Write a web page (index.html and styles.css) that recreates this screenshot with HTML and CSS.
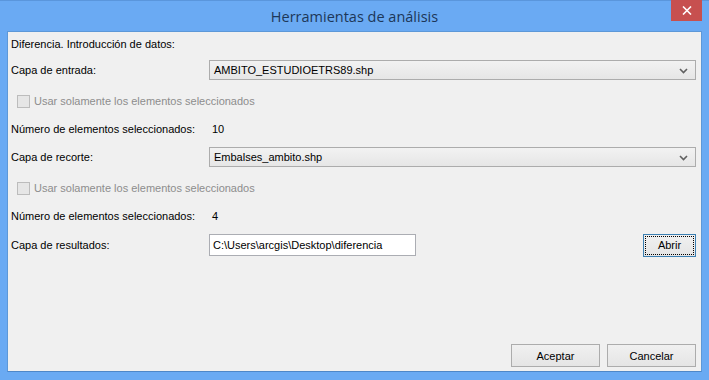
FILE: index.html
```html
<!DOCTYPE html>
<html lang="es">
<head>
  <meta charset="UTF-8" />
  <title>Herramientas de análisis</title>
  <link rel="stylesheet" href="styles.css">
</head>
<body>
  <div class="window">
    <div class="titlebar">
      <span class="title">Herramientas de análisis</span>
      <button class="close-btn">
        <svg width="10" height="9" viewBox="0 0 10 9"><path d="M1 0.5 L9 8.5 M9 0.5 L1 8.5" stroke="#fff" stroke-width="1.6"/></svg>
      </button>
    </div>

    <div class="content">
      <div class="heading">Diferencia. Introducción de datos:</div>

      <div class="row">
        <label class="label">Capa de entrada:</label>
        <div class="combo">
          <span>AMBITO_ESTUDIOETRS89.shp</span>
          <svg width="9" height="6" viewBox="0 0 9 6"><path d="M1 1 L4.5 4.5 L8 1" stroke="#606060" stroke-width="1.6" fill="none"/></svg>
        </div>
      </div>

      <div class="check-row">
        <span class="checkbox"></span>
        <span>Usar solamente los elementos seleccionados</span>
      </div>

      <div class="row">
        <span class="label">Número de elementos seleccionados:</span>
        <span class="value">10</span>
      </div>

      <div class="row">
        <label class="label">Capa de recorte:</label>
        <div class="combo">
          <span>Embalses_ambito.shp</span>
          <svg width="9" height="6" viewBox="0 0 9 6"><path d="M1 1 L4.5 4.5 L8 1" stroke="#606060" stroke-width="1.6" fill="none"/></svg>
        </div>
      </div>

      <div class="check-row">
        <span class="checkbox"></span>
        <span>Usar solamente los elementos seleccionados</span>
      </div>

      <div class="row">
        <span class="label">Número de elementos seleccionados:</span>
        <span class="value">4</span>
      </div>

      <div class="row output-row">
        <label class="label">Capa de resultados:</label>
        <div class="textbox">C:\Users\arcgis\Desktop\diferencia</div>
        <button class="btn btn-focus">Abrir</button>
      </div>

      <div class="footer">
        <button class="btn btn-wide">Aceptar</button>
        <button class="btn btn-wide">Cancelar</button>
      </div>
    </div>
  </div>
</body>
</html>
```

FILE: styles.css
```css
html, body {
  margin: 0;
  padding: 0;
}

body {
  width: 709px;
  height: 380px;
  background-color: #6aaaf3;
  font-family: "Liberation Sans", Arial, sans-serif;
  font-size: 11px;
  color: #000;
  overflow: hidden;
}

.window {
  height: 380px;
  display: flex;
  flex-direction: column;
  border-top: 1px solid #5a96dc;
  box-sizing: border-box;
}

.titlebar {
  height: 30px;
  position: relative;
  display: flex;
  justify-content: center;
  align-items: center;
}

.title {
  font-family: "Open Sans", "Noto Sans", sans-serif;
  font-size: 14.5px;
  color: #1d3758;
  margin-top: 1px;
}

.close-btn {
  position: absolute;
  top: -1px;
  right: 7px;
  width: 31px;
  height: 21px;
  border: none;
  background-color: #c7504f;
  padding: 0;
  display: flex;
  align-items: center;
  justify-content: center;
}

.content {
  margin: 0 7px 8px 7px;
  flex: 1;
  background-color: #f0f0f0;
  border: 1px solid #5d98d8;
  border-bottom-color: #4e87c8;
  padding: 4px 5px 0 3px;
  display: flex;
  flex-direction: column;
}

.heading {
  height: 16px;
  line-height: 16px;
}

.row {
  display: flex;
  align-items: center;
  height: 22px;
}

.row + .row {
  margin-top: 6px;
}

.heading + .row {
  margin-top: 7px;
}

.label {
  width: 198px;
  flex-shrink: 0;
}

.value {
  padding-left: 3px;
}

.combo {
  flex: 1;
  height: 20px;
  box-sizing: border-box;
  border: 1px solid #acacac;
  background: linear-gradient(#f2f2f2, #e6e6e6);
  display: flex;
  align-items: center;
  justify-content: space-between;
  padding: 0 7px 0 4px;
}

.combo svg {
  margin-top: 1px;
}

.check-row {
  display: flex;
  align-items: center;
  height: 22px;
  margin: 9px 0 6px 6px;
  color: #8d8d8d;
}

.checkbox {
  width: 11px;
  height: 11px;
  border: 1px solid #bcbcbc;
  background-color: #e6e6e6;
  margin-right: 4px;
}

.output-row {
  height: 24px;
}

.textbox {
  width: 207px;
  height: 22px;
  box-sizing: border-box;
  border: 1px solid #abadb3;
  background-color: #fff;
  display: flex;
  align-items: center;
  padding-left: 3px;
}

.btn {
  font-family: "Liberation Sans", Arial, sans-serif;
  font-size: 11px;
  height: 23px;
  box-sizing: border-box;
  border: 1px solid #acacac;
  background: linear-gradient(#f0f0f0, #e5e5e5);
  color: #000;
  padding: 0;
}

.btn-focus {
  margin-left: auto;
  width: 53px;
  border-color: #3c7fb1;
  outline: 1px dotted #000;
  outline-offset: -3px;
}

.footer {
  margin-top: auto;
  display: flex;
  justify-content: flex-end;
  gap: 7px;
  padding-bottom: 4px;
}

.btn-wide {
  width: 89px;
}
```
